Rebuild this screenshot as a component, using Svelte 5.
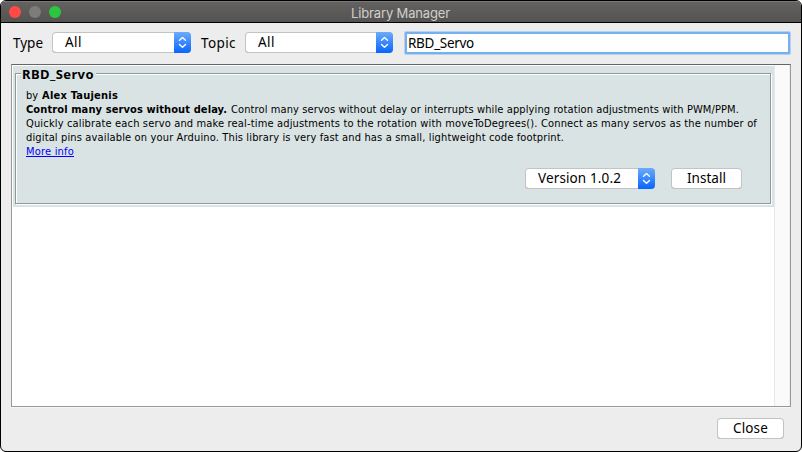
<script>
  // Spreads the letter spacing so that a label takes exactly the given width.
  function fit(node, width) {
    const natural = node.getBoundingClientRect().width;
    node.style.letterSpacing = `${(width - natural) / node.textContent.length}px`;
  }
  let query = $state('RBD_Servo');
</script>

{#snippet label(text, width)}<span class="fit" use:fit={width}>{text}</span>{/snippet}

{#snippet combo(text, width, textWidth)}
  <div class="combo" style:width="{width}px">
    <span class="value">{@render label(text, textWidth)}</span>
    <span class="arrows">
      <svg width="17" height="21" viewBox="0 0 17 21" fill="none" stroke="#fff" stroke-width="1.4" stroke-linecap="round" stroke-linejoin="round">
        <path d="M5.5 8.2 8.5 5.4 11.5 8.2M5.5 12.4 8.5 15.2 11.5 12.4" />
      </svg>
    </span>
  </div>
{/snippet}

<div class="window">
  <header>
    <div class="lights"><i class="red"></i><i class="gray"></i><i class="green"></i></div>
    <span class="title">{@render label('Library Manager', 99)}</span>
  </header>
  <div class="toolbar">
    <span class="name type">{@render label('Type', 30)}</span>
    {@render combo('All', 139, 17)}
    <span class="name topic">{@render label('Topic', 35)}</span>
    {@render combo('All', 148, 17)}
    <div class="field"><span use:fit={66}>{query}</span></div>
  </div>
  <div class="list">
    <div class="card">
      <fieldset>
        <legend>{@render label('RBD_Servo', 72)}</legend>
        <div class="text">
          <div>{@render label('by', 12)}<b class="author">{@render label('Alex Taujenis', 76)}</b></div>
          <div><b>{@render label('Control many servos without delay.', 201)}</b><span class="rest">{@render label('Control many servos without delay or interrupts while applying rotation adjustments with PWM/PPM.', 508)}</span></div>
          <div>{@render label('Quickly calibrate each servo and make real-time adjustments to the rotation with moveToDegrees(). Connect as many servos as the number of', 731)}</div>
          <div>{@render label('digital pins available on your Arduino. This library is very fast and has a small, lightweight code footprint.', 538)}</div>
          <div class="link">{@render label('More info', 48)}</div>
        </div>
        <div class="actions">
          {@render combo('Version 1.0.2', 130, 83)}
          <div class="button install">{@render label('Install', 39)}</div>
        </div>
      </fieldset>
    </div>
    <div class="track"></div>
  </div>
  <footer><div class="button close">{@render label('Close', 35)}</div></footer>
</div>

<style>
  :global(body) { margin: 0; background: #fff; }
  .window {
    box-sizing: border-box; width: 802px; height: 452px; overflow: hidden;
    border: 1px solid #000; border-radius: 6px; background: #ededed; color: #000;
    display: flex; flex-direction: column;
    font: 13.5px/16px "Noto Sans", "Open Sans", sans-serif; white-space: nowrap;
  }
  .fit { display: inline-block; }
  header {
    box-sizing: border-box; height: 22px; flex: none; display: flex; align-items: center;
    background: linear-gradient(#646260, #555351); border-top: 1px solid #7b7978; border-bottom: 1px solid #000;
  }
  .lights { display: flex; gap: 8px; padding: 0 0 1px 8px; width: 342px; box-sizing: border-box; }
  .lights i { width: 12px; height: 12px; border-radius: 50%; }
  .red { background: #ff4a48; }
  .gray { background: #7e7c7a; }
  .green { background: #2ac640; }
  .title { color: #d0cfce; font: 13px/16px "Inter", "Liberation Sans", sans-serif; padding: 1px 0 0 8px; }
  .toolbar { display: flex; height: 41px; flex: none; box-sizing: border-box; padding: 9px 10px 0 12px; align-items: flex-start; }
  .name { padding-top: 3px; height: 16px; box-sizing: content-box; }
  .type { width: 39px; }
  .topic { width: 44px; margin-left: 10px; }
  .combo {
    display: flex; height: 21px; box-sizing: border-box; flex: none; overflow: hidden;
    background: #fff; border-radius: 4px;
    box-shadow: inset 0 0 0 1px #c2c4c4, inset 0 -1px 0 #aaa;
  }
  .value { flex: 1; padding: 2px 0 0 13px; }
  .arrows { width: 17px; height: 21px; background: linear-gradient(#6cabfb, #0865fd); }
  .arrows svg { display: block; }
  .field {
    box-sizing: border-box; width: 385px; height: 22px; margin-left: 12px; padding: 1px 0 0 1px; flex: none;
    border: 2px solid #78b0ee; box-shadow: 0 0 0 1px #b1d2f5; background: #fff; border-radius: 1px;
  }
  .field span { display: inline-block; }
  .list {
    box-sizing: border-box; width: 780px; height: 343px; margin: 0 0 0 10px; flex: none;
    border: 1px solid #999; border-top-color: #666; background: #fff; display: flex; justify-content: space-between;
    padding-top: 1px; box-shadow: 0 1px 0 #f7f7f7;
  }
  .card { box-sizing: border-box; width: 762px; height: 141px; margin-left: 1px; background: #dae3e3; padding: 0 3px 3px 2px; }
  .track { box-sizing: border-box; width: 16px; border-left: 1px solid #e8e8e8; border-right: 1px solid #ededed; background: #fafafa; margin-top: -1px; }
  fieldset {
    box-sizing: border-box; width: 756px; height: 138px; margin: 0; padding: 0; min-width: 0;
    border: 1px solid #8f9999; box-shadow: 1px 1px 0 #fff, inset 1px 1px 0 #fff;
  }
  legend { font: bold 13px/16px "Noto Sans", sans-serif; height: 15px; padding: 0 2px 0 1px; margin-left: 5px; background: #dae3e3; }
  .text { font: 11px/14px "DejaVu Sans Condensed", "DejaVu Sans", sans-serif; font-stretch: condensed; padding: 8px 0 0 10px; height: 69px; }
  .text div { height: 14px; }
  .text .author { margin-left: 4px; }
  .rest { margin-left: 4px; }
  .text .link { color: #00f; }
  .link .fit { text-decoration: underline; }
  .actions { display: flex; padding: 10px 0 0 509px; }
  .button {
    box-sizing: border-box; height: 21px; padding: 2px 0 0 16px; background: #fff; border-radius: 4px;
    box-shadow: inset 0 0 0 1px #c2c4c4, inset 0 -1px 0 #aaa;
  }
  .install { width: 71px; margin-left: 16px; }
  .close { width: 67px; }
  footer { display: flex; padding: 11px 0 0 716px; }
</style>
